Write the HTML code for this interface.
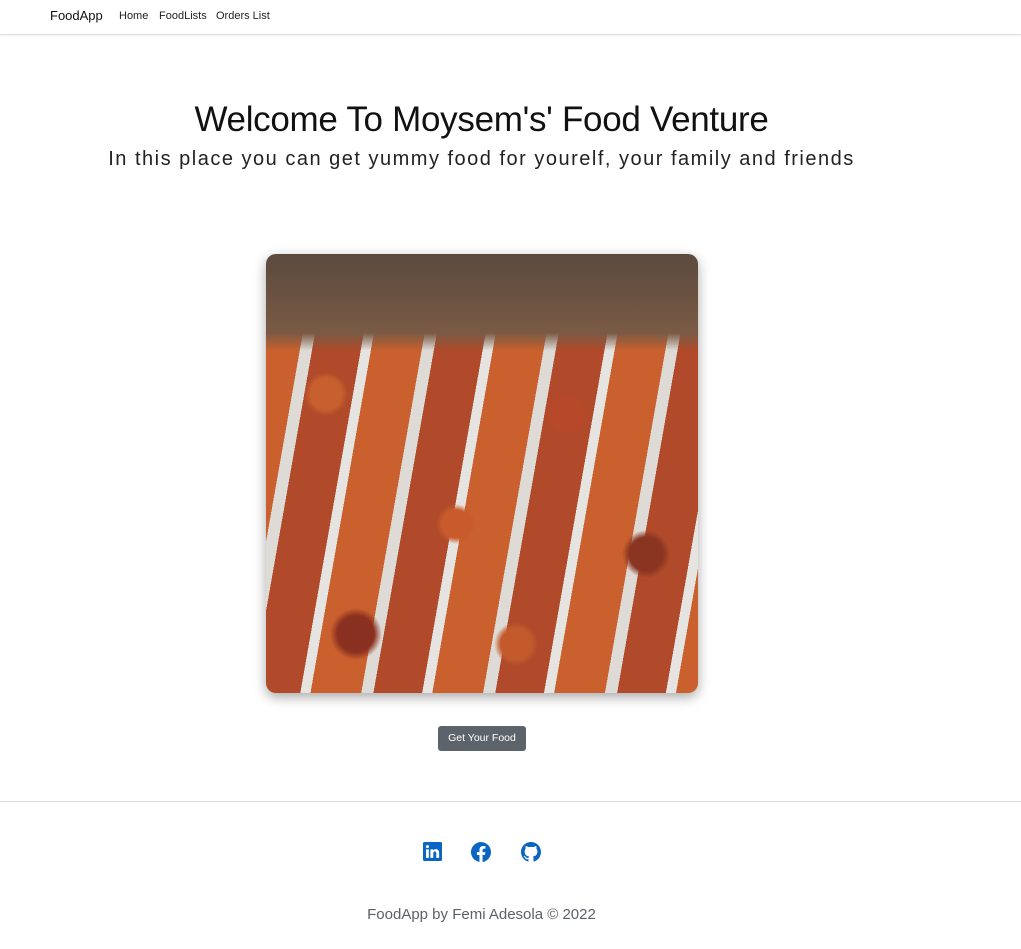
<!DOCTYPE html>
<html><head><style>
body{margin:0;font-family:"Liberation Sans",sans-serif;background:#fff;width:1021px;height:949px;position:relative;overflow:hidden}
.nav{height:34px;border-bottom:1px solid #d8dde3;box-shadow:0 1px 2px rgba(0,0,0,.05);position:relative}
.nav span{position:absolute;top:10px;font-size:11px;color:#222}
.brand{left:50px;top:8px!important;font-size:13px!important;color:#111!important}
h1{position:absolute;top:100px;left:0;width:963px;text-align:center;margin:0;font-weight:400;font-size:35px;color:#111;letter-spacing:-.3px}
h2{position:absolute;top:148px;left:0;width:963px;text-align:center;margin:0;font-weight:400;font-size:20px;color:#222;letter-spacing:1.5px}
.img{position:absolute;left:266px;top:254px;width:432px;height:439px;border-radius:10px;overflow:hidden;box-shadow:0 4px 12px rgba(0,0,0,.35);
background:
radial-gradient(circle 22px at 60px 140px,#c8602e 70%,transparent),
radial-gradient(circle 20px at 190px 270px,#c85a2c 70%,transparent),
radial-gradient(circle 22px at 300px 160px,#b8482a 70%,transparent),
radial-gradient(circle 24px at 380px 300px,#8a3522 70%,transparent),
radial-gradient(circle 26px at 90px 380px,#8a3020 70%,transparent),
radial-gradient(circle 22px at 250px 390px,#c45a2c 70%,transparent),
linear-gradient(180deg,#5a4a3e 0,#7a5a44 18%,transparent 22%),
repeating-linear-gradient(100deg,#c9602e 0 50px,#dedbd6 50px 62px,#b04a2a 62px 110px,#e6e4e0 110px 120px),
#c25a30}
.btn{position:absolute;left:438px;top:726px;width:88px;height:25px;background:#5c636a;border-radius:3px;color:#fff;font-size:10.5px;line-height:25px;text-align:center}
.hr{position:absolute;top:801px;left:0;width:1021px;height:1px;background:#dcdcdc}
.ic{position:absolute;top:842px}
.foot{position:absolute;top:906px;left:0;width:963px;text-align:center;font-size:15px;color:#5b6168}
</style></head><body>
<div class="nav"><span class="brand">FoodApp</span><span style="left:119px">Home</span><span style="left:159px">FoodLists</span><span style="left:216px">Orders List</span></div>
<h1>Welcome To Moysem's' Food Venture</h1>
<h2>In this place you can get yummy food for yourelf, your family and friends</h2>
<div class="img"></div>
<div class="btn">Get Your Food</div>
<div class="hr"></div>
<svg class="ic" style="left:423px" width="19" height="19" viewBox="0 0 16 16"><path fill="#0a66c2" d="M0 1.15C0 .5.53 0 1.18 0h13.64C15.47 0 16 .5 16 1.15v13.7c0 .64-.53 1.15-1.180 1.15H1.18C.53 16 0 15.5 0 14.85V1.15zm4.94 12.24V6.17H2.54v7.22h2.4zM3.74 5.18c.84 0 1.36-.55 1.36-1.25-.02-.71-.52-1.250-1.34-1.25-.82 0-1.36.54-1.36 1.25 0 .7.52 1.25 1.33 1.25h.01zm4.91 8.2V9.35c0-.22.02-.43.08-.58.17-.43.57-.88 1.23-.88.87 0 1.21.66 1.21 1.63v3.87h2.4V9.25c0-2.22-1.18-3.25-2.76-3.25-1.27 0-1.84.7-2.16 1.2v.02h-.02l.02-.02V6.17h-2.4c.03.68 0 7.22 0 7.22h2.4z"/></svg>
<svg class="ic" style="left:471px" width="20" height="20" viewBox="0 0 16 16"><path fill="#0a66c2" d="M16 8.05A8 8 0 1 0 6.75 15.95v-5.6H4.72V8.05h2.03V6.3c0-2 1.2-3.12 3.02-3.12.88 0 1.8.16 1.8.16v1.97h-1.01c-1 0-1.31.62-1.31 1.25v1.5h2.22l-.35 2.3H9.25v5.6A8 8 0 0 0 16 8.05z"/></svg>
<svg class="ic" style="left:521px" width="20" height="20" viewBox="0 0 16 16"><path fill="#0a66c2" d="M8 0C3.58 0 0 3.58 0 8c0 3.54 2.290 6.53 5.47 7.59.4.07.55-.17.55-.38 0-.19-.01-.82-.01-1.49-2.01.37-2.53-.49-2.69-.94-.09-.23-.48-.94-.82-1.13-.28-.15-.68-.52-.01-.53.63-.01 1.08.58 1.23.82.72 1.21 1.87.87 2.33.66.07-.52.28-.87.51-1.07-1.78-.2-3.64-.89-3.64-3.95 0-.87.31-1.59.82-2.15-.08-.2-.36-1.02.08-2.12 0 0 .67-.21 2.2.82.64-.18 1.32-.27 2-.27.68 0 1.36.09 2 .27 1.53-1.04 2.2-.82 2.2-.82.44 1.1.16 1.92.08 2.12.51.56.82 1.27.82 2.15 0 3.07-1.87 3.75-3.65 3.95.29.25.54.73.54 1.48 0 1.07-.01 1.93-.01 2.2 0 .21.15.46.55.38A8.01 8.01 0 0 0 16 8c0-4.42-3.58-8-8-8z"/></svg>
<div class="foot">FoodApp by Femi Adesola © 2022</div>
</body></html>
